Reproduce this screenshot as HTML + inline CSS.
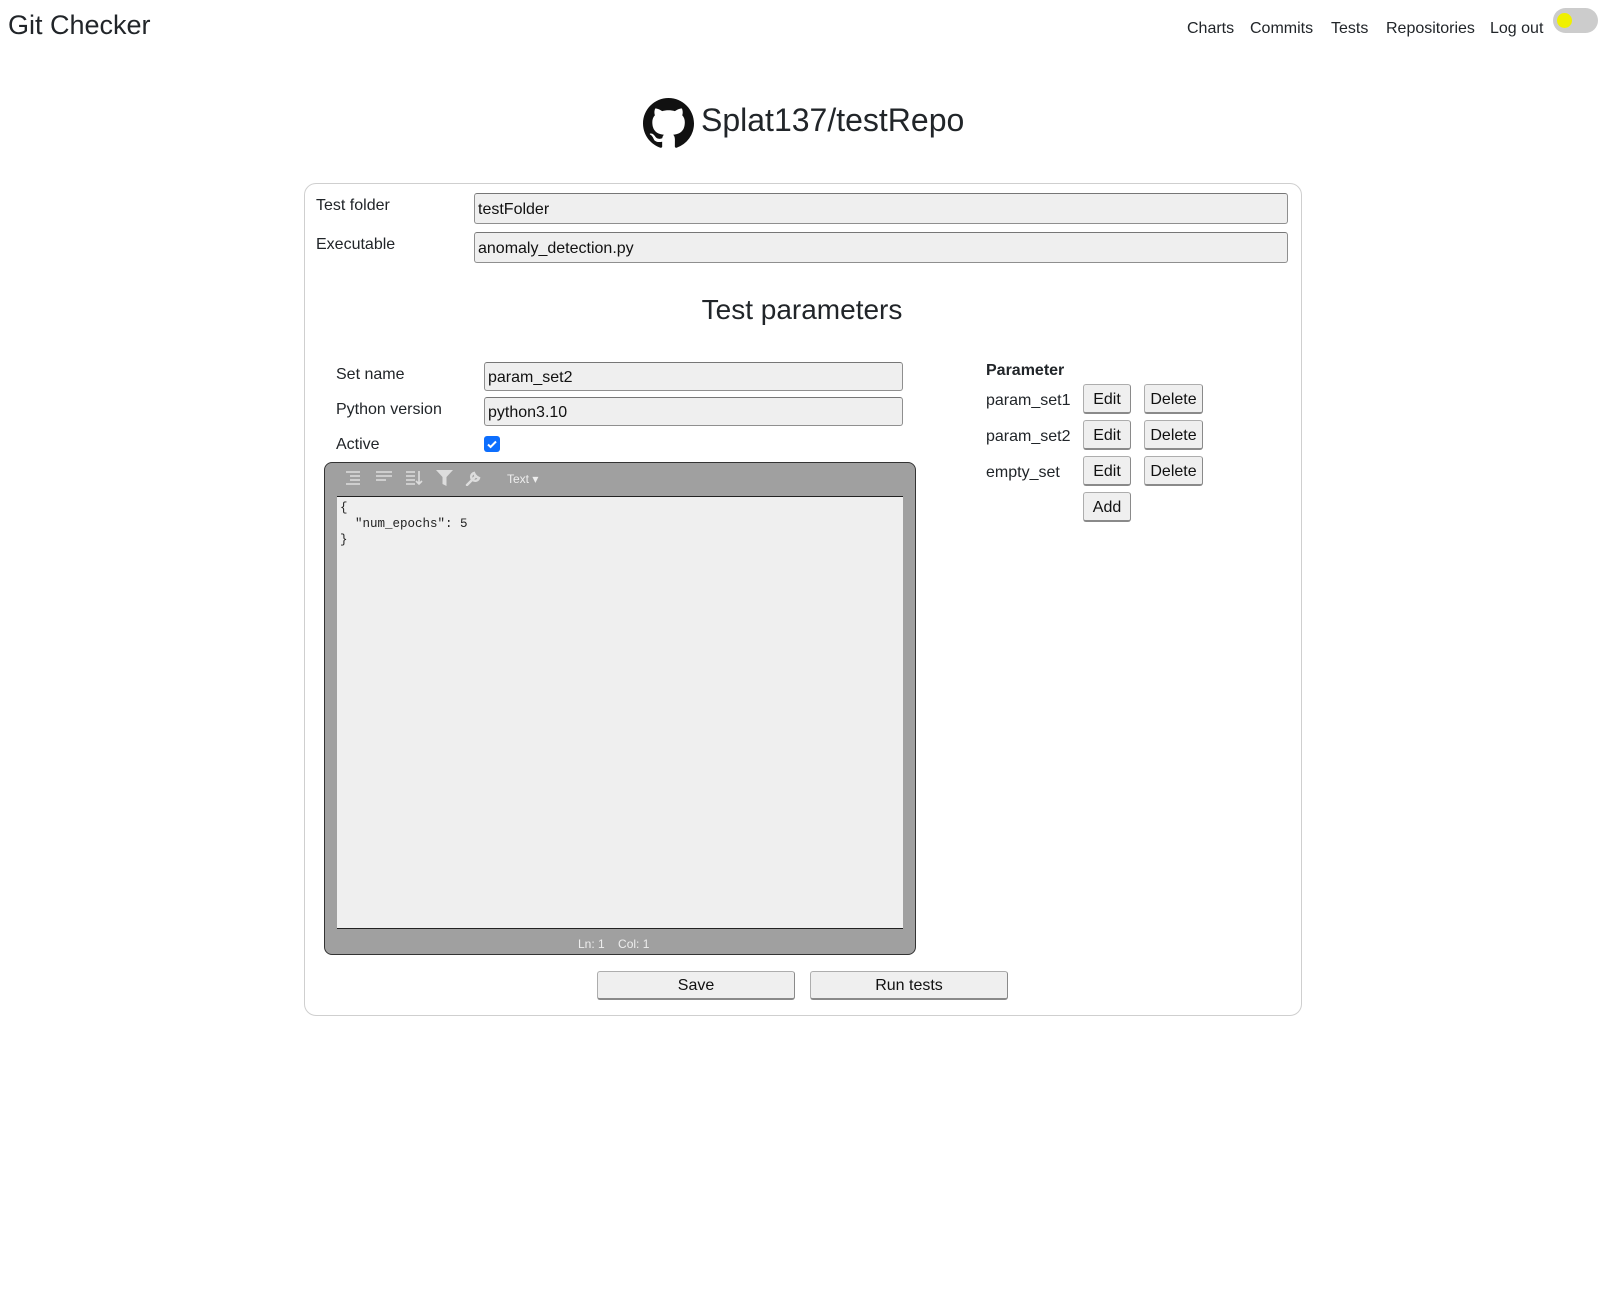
<!DOCTYPE html>
<html><head><meta charset="utf-8"><style>
*{box-sizing:border-box;margin:0;padding:0}
body{width:1605px;height:1289px;background:#fff;font-family:"Liberation Sans","DejaVu Sans",sans-serif;color:#212529;position:relative;overflow:hidden}
.a{position:absolute;white-space:nowrap}
.lbl{font-size:16px;line-height:20px}
.inp{position:absolute;background:#efefef;border:1px solid #8f8f8f;border-top-color:#767676;border-radius:3px;font-size:16px;padding:6px 3px 0;line-height:20px;color:#111}
.btn{position:absolute;background:#efefef;border:1px solid #adadad;border-right-color:#8a8a8a;border-bottom:2px solid #8a8a8a;border-radius:3px;font-size:16px;text-align:center;color:#111}
.ic{position:absolute;top:470px}
</style></head><body>
<div class="a" style="left:8px;top:8px;font-size:27px;line-height:34px">Git Checker</div>
<div class="a" style="left:1187px;top:19px;font-size:16px;line-height:20px">Charts</div>
<div class="a" style="left:1250px;top:19px;font-size:16px;line-height:20px">Commits</div>
<div class="a" style="left:1331px;top:19px;font-size:16px;line-height:20px">Tests</div>
<div class="a" style="left:1386px;top:19px;font-size:16px;line-height:20px">Repositories</div>
<div class="a" style="left:1490px;top:19px;font-size:16px;line-height:20px">Log out</div>
<div class="a" style="left:1553px;top:8px;width:45px;height:25px;border-radius:13px;background:#ccc"></div>
<div class="a" style="left:1557px;top:13px;width:15px;height:15px;border-radius:50%;background:#f0f000"></div>

<svg class="a" style="left:643px;top:98px" width="51" height="51" viewBox="0 0 16 16"><path fill="#111" d="M8 0C3.58 0 0 3.580 0 8c0 3.54 2.290 6.53 5.470 7.59.4.07.55-.17.55-.38 0-.19-.01-.82-.01-1.490-2.010.37-2.530-.49-2.690-.94-.09-.23-.48-.94-.82-1.130-.28-.15-.68-.52-.01-.53.63-.01 1.080.58 1.230.82.72 1.210 1.870.87 2.330.66.07-.52.28-.87.51-1.070-1.780-.2-3.640-.89-3.640-3.950 0-.87.31-1.590.82-2.150-.08-.2-.36-1.020.08-2.120 0 0 .67-.21 2.200.82.64-.18 1.320-.27 2-.27.68 0 1.360.09 2 .27 1.530-1.040 2.200-.82 2.200-.82.44 1.100.16 1.920.08 2.120.51.56.82 1.270.82 2.150 0 3.070-1.870 3.750-3.650 3.950.29.25.54.73.54 1.480 0 1.070-.01 1.930-.01 2.200 0 .21.15.46.55.38A8.013 8.013 0 0016 8c0-4.420-3.580-8-8-8z"/></svg>
<div class="a" style="left:701px;top:100px;font-size:32px;line-height:40px">Splat137/testRepo</div>

<div class="a" style="left:304px;top:183px;width:998px;height:833px;border:1px solid #cfcfcf;border-radius:12px"></div>
<div class="a lbl" style="left:316px;top:196px">Test folder</div>
<div class="a lbl" style="left:316px;top:235px">Executable</div>
<div class="inp" style="left:474px;top:193px;width:814px;height:31px">testFolder</div>
<div class="inp" style="left:474px;top:232px;width:814px;height:31px">anomaly_detection.py</div>
<div class="a" style="left:602px;top:292px;width:400px;text-align:center;font-size:28px;line-height:36px">Test parameters</div>

<div class="a lbl" style="left:336px;top:365px">Set name</div>
<div class="a lbl" style="left:336px;top:400px">Python version</div>
<div class="a lbl" style="left:336px;top:435px">Active</div>
<div class="inp" style="left:484px;top:362px;width:419px;height:29px;padding-top:5px">param_set2</div>
<div class="inp" style="left:484px;top:397px;width:419px;height:29px;padding-top:5px">python3.10</div>
<div class="a" style="left:484px;top:436px;width:16px;height:16px;border-radius:3px;background:#0d6efd"><svg width="16" height="16"><path d="M4 8.5l2.6 2.5L12 5.5" stroke="#fff" stroke-width="2" fill="none"/></svg></div>

<div class="a" style="left:324px;top:462px;width:592px;height:493px;background:#a0a0a0;border:1px solid #333;border-radius:8px"></div>
<div class="a" style="left:337px;top:496px;width:566px;height:433px;background:#efefef;border-top:1px solid #222;border-bottom:1px solid #222"></div>
<svg class="ic" style="left:344px" width="18" height="16"><path d="M2 2h14M6 6h10M6 10h10M2 14h14" stroke="#ddd" stroke-width="1.6"/></svg>
<svg class="ic" style="left:375px" width="18" height="16"><path d="M1 2h16M1 6h16M1 10h10" stroke="#ddd" stroke-width="1.6"/></svg>
<svg class="ic" style="left:405px" width="18" height="16"><path d="M1 2h9M1 6h9M1 10h9M1 14h9M14 1v13M11 11l3 3 3-3" stroke="#ddd" stroke-width="1.6" fill="none"/></svg>
<svg class="ic" style="left:436px" width="18" height="16"><path d="M0 0h17l-6.5 7v9l-4-2V7z" fill="#ddd"/></svg>
<svg class="ic" style="left:465px" width="18" height="16"><path d="M2 15l8-8M9 3a4 4 0 105 5l-2-1-2-2z" stroke="#ddd" stroke-width="2.4" fill="none" stroke-linecap="round"/></svg>
<div class="a" style="left:507px;top:472px;font-size:12px;color:#eee">Text ▾</div>
<div class="a" style="left:340px;top:500px;font-family:'Liberation Mono',monospace;font-size:12.5px;line-height:16px;color:#222;white-space:pre">{
  "num_epochs": 5
}</div>
<div class="a" style="left:578px;top:937px;font-size:12px;color:#eee">Ln: 1&nbsp;&nbsp;&nbsp;&nbsp;Col: 1</div>

<div class="a" style="left:986px;top:362px;font-size:16px;font-weight:bold">Parameter</div>
<div class="a lbl" style="left:986px;top:391px">param_set1</div>
<div class="a lbl" style="left:986px;top:427px">param_set2</div>
<div class="a lbl" style="left:986px;top:463px">empty_set</div>
<div class="btn" style="left:1083px;top:384px;width:48px;height:30px;line-height:29px">Edit</div>
<div class="btn" style="left:1144px;top:384px;width:59px;height:30px;line-height:29px">Delete</div>
<div class="btn" style="left:1083px;top:420px;width:48px;height:30px;line-height:29px">Edit</div>
<div class="btn" style="left:1144px;top:420px;width:59px;height:30px;line-height:29px">Delete</div>
<div class="btn" style="left:1083px;top:456px;width:48px;height:30px;line-height:29px">Edit</div>
<div class="btn" style="left:1144px;top:456px;width:59px;height:30px;line-height:29px">Delete</div>
<div class="btn" style="left:1083px;top:492px;width:48px;height:30px;line-height:29px">Add</div>

<div class="btn" style="left:597px;top:971px;width:198px;height:29px;line-height:28px">Save</div>
<div class="btn" style="left:810px;top:971px;width:198px;height:29px;line-height:28px">Run tests</div>
</body></html>
